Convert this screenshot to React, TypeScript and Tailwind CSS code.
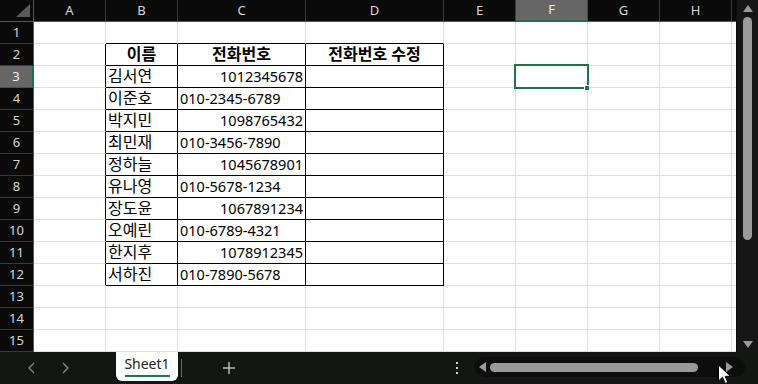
import React from "react";

const COLS = ["A", "B", "C", "D", "E", "F", "G", "H", ""];
const WIDTHS = [72, 72, 128, 138, 72, 72, 72, 72, 72];

type Cell = { t: string; align?: "l" | "r" | "c"; bold?: boolean };

const people: [string, string][] = [
  ["김서연", "1012345678"],
  ["이준호", "010-2345-6789"],
  ["박지민", "1098765432"],
  ["최민재", "010-3456-7890"],
  ["정하늘", "1045678901"],
  ["유나영", "010-5678-1234"],
  ["장도윤", "1067891234"],
  ["오예린", "010-6789-4321"],
  ["한지후", "1078912345"],
  ["서하진", "010-7890-5678"],
];

function cellData(r: number, c: number): Cell | null {
  if (r === 2) {
    if (c === 1) return { t: "이름", align: "c", bold: true };
    if (c === 2) return { t: "전화번호", align: "c", bold: true };
    if (c === 3) return { t: "전화번호 수정", align: "c", bold: true };
  }
  if (r >= 3 && r <= 12) {
    const p = people[r - 3];
    if (c === 1) return { t: p[0], align: "l" };
    if (c === 2) return { t: p[1], align: p[1].includes("-") ? "l" : "r" };
  }
  return null;
}

function inTable(r: number, c: number) {
  return r >= 2 && r <= 12 && c >= 1 && c <= 3;
}

const hangul = /[\uac00-\ud7a3]/;

export default function App() {
  const rows = Array.from({ length: 15 }, (_, i) => i + 1);
  return (
    <div
      className="relative w-[758px] h-[384px] overflow-hidden bg-[#131613] flex flex-col"
      style={{ fontFamily: '"Noto Sans", "Noto Sans CJK KR", sans-serif' }}
    >
      <div className="flex h-[352px]">
        <div className="relative w-[736px] h-[352px] overflow-hidden bg-white">
          <div className="flex h-[22px]">
            <div className="relative w-[34px] shrink-0 h-[22px] bg-[#0a0a0a] border-r border-b border-[#555]">
              <svg className="absolute left-0 top-0" width="34" height="22">
                <polygon points="30,4 30,17 16,17" fill="#5a5a5a" />
              </svg>
            </div>
            {COLS.map((col, i) => {
              const active = col === "F";
              return (
                <div
                  key={i}
                  style={{ width: WIDTHS[i] }}
                  className={
                    active
                      ? "shrink-0 h-[22px] flex items-center justify-center bg-[#666666] border-r border-r-[#4a4a4a] border-b-2 border-b-[#217346] text-[13px] text-[#f0f0f0]"
                      : "shrink-0 h-[22px] flex items-center justify-center bg-[#0a0a0a] border-r border-r-[#3a3a3a] border-b border-b-[#555] text-[13px] text-[#d6d6d6]"
                  }
                >
                  {col}
                </div>
              );
            })}
          </div>
          {rows.map((r) => (
            <div key={r} className="flex h-[22px]">
              <div
                className={
                  r === 3
                    ? "w-[34px] shrink-0 h-[22px] flex items-center justify-center bg-[#666666] border-r-2 border-r-[#217346] border-b border-b-[#4a4a4a] text-[13px] text-[#f0f0f0]"
                    : "w-[34px] shrink-0 h-[22px] flex items-center justify-center bg-[#0a0a0a] border-r border-r-[#555] border-b border-b-[#3a3a3a] text-[13px] text-[#d6d6d6]"
                }
              >
                {r}
              </div>
              {COLS.map((col, c) => {
                const d = cellData(r, c);
                const t = inTable(r, c);
                const rightBlack = t || (c === 0 && r >= 2 && r <= 12);
                const bottomBlack = t || (r === 1 && c >= 1 && c <= 3);
                const isK = d ? hangul.test(d.t) : false;
                const cls = [
                  "shrink-0 h-[22px] border-r border-b overflow-visible whitespace-nowrap leading-[21px] text-black px-[2px]",
                  isK ? "text-[16px]" : "text-[14.5px]",
                  rightBlack ? "border-r-black" : "border-r-[#e0e0e0]",
                  bottomBlack ? "border-b-black" : "border-b-[#e0e0e0]",
                  d?.align === "r" ? "text-right" : d?.align === "c" ? "text-center" : "text-left",
                  d?.bold ? "font-bold" : "",
                ].join(" ");
                return (
                  <div key={c} style={{ width: WIDTHS[c] }} className={cls}>
                    {d?.t ?? ""}
                  </div>
                );
              })}
            </div>
          ))}
          <div className="absolute left-[514px] top-[64px] w-[75px] h-[25px] border-2 border-[#217346]" />
          <div className="absolute left-[584px] top-[85px] w-[6px] h-[6px] bg-[#217346] border border-white" />
        </div>
        <div className="relative w-[22px] h-[352px] bg-[#161616] border-l border-[#0c0c0c] flex flex-col items-center">
          <svg className="mt-[5px]" width="10" height="7">
            <polygon points="5,0 10,7 0,7" fill="#9a9a9a" />
          </svg>
          <div className="mt-[5px] w-[9px] h-[223px] rounded-full bg-[#9a9a9a]" />
          <div className="flex-1" />
          <svg className="mb-[4px]" width="10" height="7">
            <polygon points="0,0 10,0 5,7" fill="#9a9a9a" />
          </svg>
        </div>
      </div>

      <div className="flex h-[32px] items-start bg-[#131613]">
        <div className="w-[116px] h-[32px] pl-[15px] flex items-center">
          <div className="w-[33px] flex justify-center">
            <svg width="8" height="12">
              <polyline points="6,1 1,6 6,11" fill="none" stroke="#8a8a8a" strokeWidth="1.3" />
            </svg>
          </div>
          <div className="w-[33px] flex justify-center">
            <svg width="8" height="12">
              <polyline points="2,1 7,6 2,11" fill="none" stroke="#8a8a8a" strokeWidth="1.3" />
            </svg>
          </div>
        </div>
        <div className="w-[62px] h-[29px] bg-white rounded-b-[6px] flex flex-col items-center pt-[3px]">
          <span className="text-[14px] leading-[18px] text-[#222]">Sheet1</span>
          <div className="mt-[2px] w-[45px] h-[2px] bg-[#217346]" />
        </div>
        <div className="ml-[3px] mt-[7px] w-px h-[18px] bg-[#6a6a6a]" />
        <div className="ml-[23px] w-[48px] h-[32px] flex items-center justify-center">
          <svg width="12" height="12">
            <line x1="6" y1="0" x2="6" y2="12" stroke="#d0d0d0" strokeWidth="1.3" />
            <line x1="0" y1="6" x2="12" y2="6" stroke="#d0d0d0" strokeWidth="1.3" />
          </svg>
        </div>
        <div className="ml-[194px] w-[20px] h-[32px] flex items-center justify-center">
          <svg width="4" height="12">
            <rect x="1" y="0" width="2" height="2" fill="#d0d0d0" />
            <rect x="1" y="5" width="2" height="2" fill="#d0d0d0" />
            <rect x="1" y="10" width="2" height="2" fill="#d0d0d0" />
          </svg>
        </div>
        <div className="ml-[8px] mt-[5px] w-[270px] h-[20px] rounded-full bg-[#0d0d0d] flex items-center">
          <svg className="ml-[4px]" width="7" height="10">
            <polygon points="7,0 7,10 0,5" fill="#9a9a9a" />
          </svg>
          <div className="ml-[4px] w-[208px] h-[9px] rounded-full bg-[#9a9a9a]" />
          <div className="flex-1" />
          <svg className="mr-[12px]" width="7" height="10">
            <polygon points="0,0 0,10 7,5" fill="#9a9a9a" />
          </svg>
        </div>
      </div>

      <svg className="absolute left-[717px] top-[364px]" width="16" height="22" viewBox="0 0 16 22">
        <path d="M1.5 1 L1.5 17 L5.5 13.2 L8.3 19.5 L10.8 18.4 L8.1 12.3 L13.3 12.3 Z" fill="white" stroke="black" strokeWidth="1" strokeLinejoin="round" />
      </svg>
    </div>
  );
}
